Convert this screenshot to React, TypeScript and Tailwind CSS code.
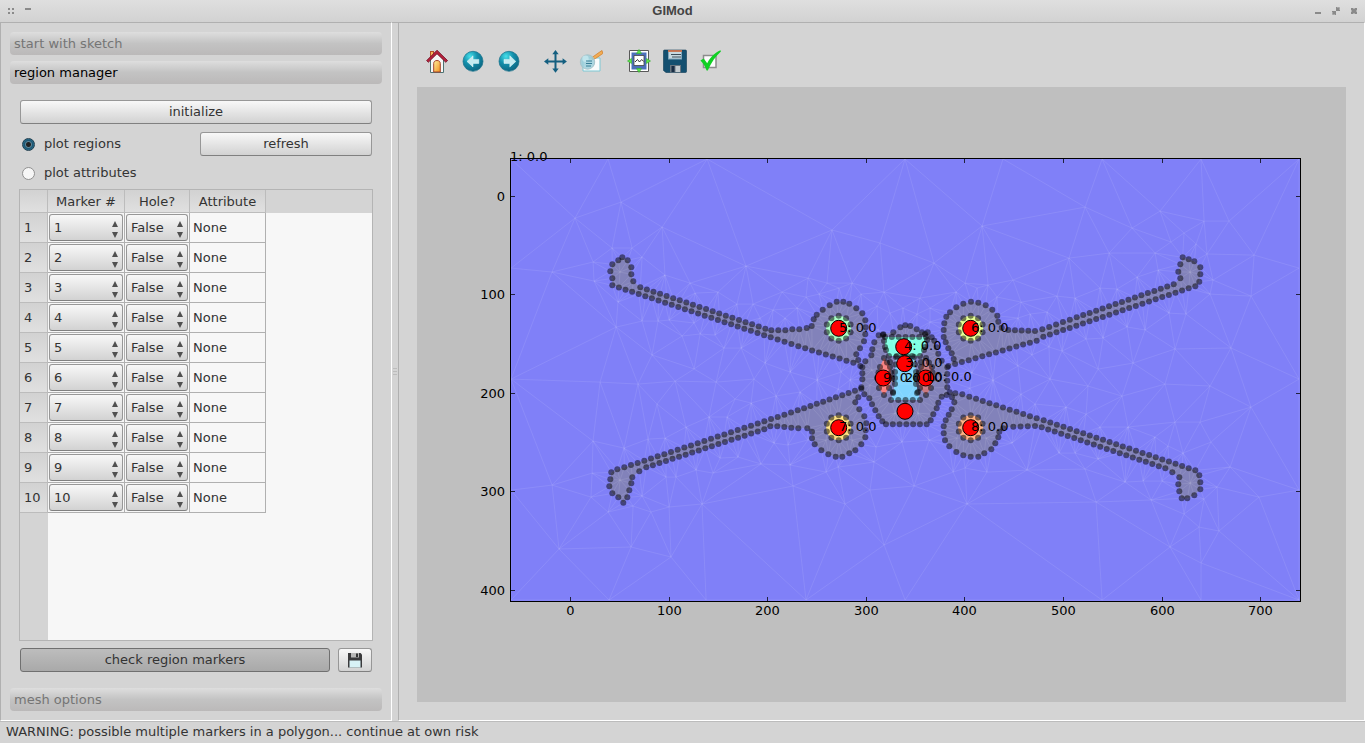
import type { ReactNode } from 'react';

type Pt = [number, number];

const SPACING = 7;

const UPPER_LEFT_ARM: Pt[] = [
  [622.3, 257.3], [627.7, 260.3], [631.3, 267.3], [631.3, 274.3], [633.3, 281.3], [640.3, 287.3],
  [765.3, 328.7], [771.3, 330.3], [785.3, 330.3], [792.3, 329.3], [799.3, 329.3], [806.7, 328],
  [811.7, 326], [813.7, 319.3], [816.7, 314.7], [822.7, 309.7], [829.7, 305.3], [836.7, 301.7],
  [843.3, 301.7], [849.3, 303.7], [856.3, 308.3], [862.3, 313.3], [865.3, 320.3], [865.7, 327.3],
  [865.3, 334.3], [864, 341.3], [860, 348.3], [856.3, 354.3], [858.3, 360], [860.3, 366],
  [853.3, 362.7], [798.3, 346.3], [770.7, 337.3], [612.3, 285.3], [612.3, 278.3], [610.3, 271.3],
  [612.3, 264.3], [618.3, 260.3],
];

const LOWER_LEFT_ARM: Pt[] = [
  [611.3, 472.3], [617.3, 469.3], [624.3, 467.3], [797.7, 410.3], [861.3, 388.7], [858.3, 397.3],
  [855.3, 402.3], [859.3, 409.3], [864.3, 416.3], [866.3, 423.3], [865.7, 430.3], [865.3, 437.3],
  [861.3, 444.3], [855.3, 450.3], [849.3, 453.3], [842.3, 456.7], [835.7, 456.7], [828.3, 454.3],
  [821.3, 450.3], [814.7, 444.3], [812, 438.3], [812, 431.7], [807.3, 428.3], [798.3, 428.3],
  [777.3, 426.3], [770.3, 426.3], [764.3, 429.3], [646.3, 467.3], [639.3, 471.3], [632.3, 477.3],
  [631.3, 483.3], [629.3, 490.3], [627.3, 497.3], [623.3, 502.7], [618.3, 497.3], [612.3, 493.3],
  [609.3, 486.3], [610.3, 479.3],
];

const UPPER_RIGHT_ARM: Pt[] = [
  [1182.7, 257.3], [1188.7, 259.3], [1194.3, 261.3], [1200.3, 267.3], [1200.3, 274.3],
  [1199.3, 281.7], [1195.3, 286.3], [1188.7, 288.3], [1043.3, 336.7], [1036.7, 340.7],
  [948.3, 366], [953.7, 359], [951.7, 353.3], [948.3, 348.3], [945.7, 342.3], [943.7, 337],
  [943.7, 330], [944.3, 323.3], [946.3, 316.7], [950, 312.3], [956.3, 307.3], [963.3, 303.7],
  [971, 301.7], [978.3, 302.7], [985.7, 305.3], [992.3, 309.7], [997.3, 315.7], [998.3, 321.7],
  [1001.7, 327.7], [1008.3, 330], [1035, 331], [1042.3, 329.3], [1076.7, 317.3], [1173.7, 284.3],
  [1180.3, 278.3], [1178.3, 271.7], [1180.3, 264.3],
];

const LOWER_RIGHT_ARM: Pt[] = [
  [949.7, 392.3], [955.3, 393.3], [962.3, 394.3], [969.3, 396.7], [1036.7, 418.3], [1043.7, 420.3],
  [1195.3, 470.3], [1199.3, 475.3], [1200.3, 482.3], [1200.3, 489.3], [1194.3, 495.3],
  [1187.3, 498.3], [1181.7, 498.3], [1179.3, 491.3], [1178.3, 484.3], [1179.3, 477.3],
  [1172.3, 472.3], [1165.3, 468.3], [1041.7, 427.3], [1035, 426], [1013.3, 426.7], [1003.3, 428.3],
  [999.3, 431.7], [998.3, 437.3], [995.3, 443.3], [991.3, 449.3], [984.3, 453.3], [978.3, 456.7],
  [970.7, 456.7], [963.3, 455.3], [956.3, 452], [949.3, 446.3], [945, 440.3], [943.7, 433.3],
  [943.7, 426.3], [945.7, 420.3], [951.7, 409.3], [954.3, 402.3],
];

const BODY: Pt[] = [
  [878.7, 335.3], [883.3, 334.3], [893.3, 332.3], [900.3, 327.3], [905.3, 325.3], [910.3, 326],
  [916.7, 329.3], [922, 332.3], [927.7, 332.3], [931.7, 337.3], [934.3, 340.7], [936.7, 347.3],
  [938.3, 353.7], [941.7, 360.7], [947.3, 367.3], [947.3, 387.3], [946.7, 395], [941.7, 396.7],
  [938.3, 402.7], [936.7, 408.3], [933.3, 414.3], [930.7, 420.3], [926.7, 424.3], [886, 424.3],
  [882.3, 421.3], [878.7, 416.3], [875.3, 410.3], [872, 404.3], [869.3, 398.3], [864.3, 394.3],
  [861.3, 387.3], [862.3, 379.3], [862.3, 367.3], [865.3, 361.3], [871.3, 355.3], [872.3, 349.3],
  [874.3, 342.3],
];

const HEAD: Pt[] = [[885, 337], [926, 337], [925, 347], [920, 356], [889, 356], [885, 347]];
const CORE: Pt[] = [[896, 357], [914, 357], [916, 372], [916, 384], [920, 400], [891, 400], [895, 384], [895, 372]];
const LEFT_POD: Pt[] = [[884, 358], [890, 367], [892, 378], [889, 388], [884, 395], [879, 388], [877, 378], [880, 367]];
const RIGHT_POD: Pt[] = [[926, 358], [932, 367], [933, 378], [931, 388], [926, 395], [920, 388], [917, 378], [921, 367]];

const ROTORS = [
  { x: 838.7, y: 328.3, fill: '#a6ffc4' },
  { x: 970.7, y: 328.3, fill: '#e6ff92' },
  { x: 838.7, y: 427.7, fill: '#ffe07e' },
  { x: 970.7, y: 427.7, fill: '#ffae80' },
];

const MARKERS: Pt[] = [
  [838.7, 328.3], [970.7, 328.3], [903.7, 346.7], [904.7, 363.7], [883.3, 378], [925.7, 378],
  [905, 411.3], [838.7, 427.7], [970.7, 427.7],
];

const LABELS: [string, number, number][] = [
  ['1: 0.0', 510, 161], ['2: 0.0', 905, 382], ['3: 0.0', 905, 367], ['4: 0.0', 904, 350],
  ['5: 0.0', 839, 332], ['6: 0.0', 971, 332], ['7: 0.0', 839, 431], ['8: 0.0', 971, 431],
  ['9: 0.0', 883, 382], ['10: 0.0', 926, 381],
];

const MESH_NODES: Pt[] = [
  [511, 159], [608, 159], [707, 159], [905, 159], [1003, 159], [1102, 159], [1201, 159], [1299, 159],
  [511, 268], [511, 379], [511, 490], [1299, 268], [1299, 379], [1299, 490],
  [511, 600], [609, 600], [706, 600], [806, 600], [905, 600], [1102, 600], [1201, 600], [1299, 600],
  [575, 218], [621, 202], [662, 227], [746, 266], [552, 272], [593, 262], [612, 248], [632, 248],
  [642, 257], [665, 275], [690, 283], [594, 281], [618, 302], [616, 327], [642, 321], [658, 321],
  [669, 320], [652, 355], [682, 336], [694, 369], [694, 323], [700, 334], [715, 335], [724, 348],
  [741, 348], [765, 363], [718, 292], [695, 293], [737, 304], [753, 304], [773, 310], [782, 292],
  [760, 318], [785, 318], [797, 308],
  [1085, 207], [1132, 228], [1160, 211], [1204, 221], [1229, 221], [1254, 255], [1109, 253],
  [1069, 258], [1155, 253], [1171, 242], [1184, 233], [1196, 244], [1207, 254], [1137, 277],
  [1158, 270], [1213, 280], [1251, 296], [1210, 294], [1186, 314], [1169, 313], [1100, 288],
  [1117, 289], [1145, 330], [1175, 349], [1231, 348], [1127, 327], [1133, 363], [1103, 338],
  [1086, 339], [1062, 351], [1098, 369], [1075, 298], [1057, 296], [1047, 312], [1049, 347],
  [832, 230], [880, 243], [934, 263], [982, 226], [808, 278], [827, 283], [852, 283], [839, 288],
  [884, 292], [861, 294], [920, 298], [965, 283], [988, 285], [1013, 280], [956, 292], [977, 288],
  [997, 297], [1021, 302], [806, 297], [819, 294], [877, 306], [890, 313], [903, 308], [917, 314],
  [930, 308], [878, 330], [930, 322], [1018, 318], [1030, 314],
  [593, 441], [657, 404], [552, 485], [624, 448], [686, 427], [592, 473], [591, 497], [608, 512],
  [633, 506], [651, 512], [669, 507], [702, 504], [559, 549], [631, 547], [671, 557], [713, 473],
  [696, 470], [676, 477], [666, 477], [642, 496], [648, 439], [665, 438], [709, 417], [727, 417],
  [751, 403], [761, 464], [793, 486], [774, 443], [788, 445], [738, 457], [720, 458],
  [1251, 407], [1200, 422], [1175, 422], [1211, 442], [1230, 467], [1183, 453], [1168, 446],
  [1128, 427], [1155, 437], [1086, 414], [1066, 407], [1100, 427], [1217, 487], [1259, 497],
  [1204, 499], [1199, 527], [1184, 514], [1219, 531], [1201, 563], [1170, 547], [1151, 500],
  [1096, 502], [1125, 482], [1143, 481], [1162, 481], [1075, 453], [1059, 453], [1098, 459],
  [1085, 469], [845, 504], [870, 490], [874, 462], [914, 486], [967, 504], [884, 545], [1027, 470],
  [987, 472], [953, 472], [965, 468], [838, 467], [826, 472], [902, 442], [929, 440], [1084, 469],
  [790, 465], [876, 447], [1012, 443], [808, 440], [600, 382], [638, 384], [675, 381], [716, 382],
  [754, 379], [790, 372], [817, 380], [841, 372], [838, 389], [800, 392], [776, 396], [735, 399],
  [972, 373], [970, 388], [993, 380], [1018, 366], [1021, 394], [1050, 379], [1088, 386],
  [1122, 396], [1165, 384], [1210, 386], [850, 380], [1035, 404], [1032, 355],
  [870, 385], [872, 370], [895, 413], [918, 413], [940, 378], [838, 316], [838, 342], [826, 325],
  [853, 330], [971, 315], [971, 343], [957, 328], [986, 328], [826, 440], [852, 440], [986, 438],
  [957, 438], [1190, 272], [620, 272], [1190, 483], [620, 480],
];

function sample(points: Pt[]): Pt[] {
  const out: Pt[] = [];
  points.forEach(([x, y], i) => {
    const [nx, ny] = points[(i + 1) % points.length];
    const steps = Math.max(1, Math.round(Math.hypot(nx - x, ny - y) / SPACING));
    for (let k = 0; k < steps; k++) out.push([x + ((nx - x) * k) / steps, y + ((ny - y) * k) / steps]);
  });
  return out;
}

function ring(cx: number, cy: number, r: number, count: number): Pt[] {
  return Array.from({ length: count }, (_, i) => {
    const a = (i / count) * Math.PI * 2 - Math.PI / 2;
    return [cx + r * Math.cos(a), cy + r * Math.sin(a)];
  });
}

// Bowyer-Watson triangulation, returned as a single path of unique edges.
function meshPath(input: Pt[]): string {
  const pts: Pt[] = [];
  input.forEach((p, i) => {
    const q: Pt = [p[0] + ((i * 37) % 11) * 0.01, p[1] + ((i * 53) % 13) * 0.01];
    if (!pts.some((o) => Math.hypot(o[0] - q[0], o[1] - q[1]) < 2)) pts.push(q);
  });
  const n = pts.length;
  const all: Pt[] = [...pts, [-20000, -10000], [20000, -10000], [900, 30000]];
  type Tri = { v: number[]; x: number; y: number; r: number };
  const make = (a: number, b: number, c: number): Tri => {
    const [ax, ay] = all[a];
    const [bx, by] = all[b];
    const [cx, cy] = all[c];
    const d = 2 * (ax * (by - cy) + bx * (cy - ay) + cx * (ay - by)) || 1e-9;
    const a2 = ax * ax + ay * ay;
    const b2 = bx * bx + by * by;
    const c2 = cx * cx + cy * cy;
    const x = (a2 * (by - cy) + b2 * (cy - ay) + c2 * (ay - by)) / d;
    const y = (a2 * (cx - bx) + b2 * (ax - cx) + c2 * (bx - ax)) / d;
    return { v: [a, b, c], x, y, r: (ax - x) ** 2 + (ay - y) ** 2 };
  };
  let tris: Tri[] = [make(n, n + 1, n + 2)];
  for (let i = 0; i < n; i++) {
    const [px, py] = all[i];
    const edges = new Map<string, [number, number, number]>();
    const keep: Tri[] = [];
    for (const t of tris) {
      if ((px - t.x) ** 2 + (py - t.y) ** 2 >= t.r) {
        keep.push(t);
        continue;
      }
      for (let k = 0; k < 3; k++) {
        const a = t.v[k];
        const b = t.v[(k + 1) % 3];
        const key = a < b ? `${a}-${b}` : `${b}-${a}`;
        const seen = edges.get(key);
        edges.set(key, [a, b, (seen ? seen[2] : 0) + 1]);
      }
    }
    edges.forEach(([a, b, count]) => {
      if (count === 1) keep.push(make(a, b, i));
    });
    tris = keep;
  }
  const done = new Set<string>();
  let d = '';
  for (const t of tris) {
    for (let k = 0; k < 3; k++) {
      const a = t.v[k];
      const b = t.v[(k + 1) % 3];
      if (a >= n || b >= n) continue;
      const key = a < b ? `${a}-${b}` : `${b}-${a}`;
      if (done.has(key)) continue;
      done.add(key);
      d += `M${all[a][0].toFixed(1)} ${all[a][1].toFixed(1)}L${all[b][0].toFixed(1)} ${all[b][1].toFixed(1)}`;
    }
  }
  return d;
}

const DOTS: Pt[] = [
  ...[UPPER_LEFT_ARM, LOWER_LEFT_ARM, UPPER_RIGHT_ARM, LOWER_RIGHT_ARM, BODY, HEAD, CORE, LEFT_POD, RIGHT_POD].flatMap(sample),
  ...ROTORS.flatMap((r) => ring(r.x, r.y, 12.5, 10)),
  [883, 335], [884, 341], [927, 340], [925, 334], [890, 362], [921, 362], [886, 350], [924, 350], [893, 393], [917, 393],
];

const MESH = meshPath([...MESH_NODES, ...DOTS]);

const poly = (p: Pt[]) => p.map((q) => q.join(',')).join(' ');

const X_TICKS = [0, 100, 200, 300, 400, 500, 600, 700].map((v) => ({ v, p: Math.floor(570.4 + v * 0.986) + 0.5 }));
const Y_TICKS = [0, 100, 200, 300, 400].map((v) => ({ v, p: Math.floor(196 + v * 0.986) + 0.5 }));

function Plot() {
  return (
    <svg viewBox="417 87 929 615" role="img" aria-label="Region plot" className="block size-full font-['DejaVu_Sans',sans-serif] text-[13px]">
      <rect x="510" y="158" width="790" height="443" fill="#8080f8" />
      <g fill="#8282ba">
        {[UPPER_LEFT_ARM, LOWER_LEFT_ARM, UPPER_RIGHT_ARM, LOWER_RIGHT_ARM, BODY].map((p, i) => (
          <polygon key={i} points={poly(p)} />
        ))}
      </g>
      <polygon points={poly(HEAD)} fill="#80ffe4" />
      <polygon points={poly(CORE)} fill="#80d4ff" />
      <polygon points={poly(LEFT_POD)} fill="#f88080" />
      <polygon points={poly(RIGHT_POD)} fill="#c87880" />
      {ROTORS.map((r) => (
        <circle key={r.fill} cx={r.x} cy={r.y} r="12.5" fill={r.fill} />
      ))}
      <path d={MESH} fill="none" stroke="#fff" strokeOpacity="0.09" strokeWidth="1" />
      <g fill="#000" fillOpacity="0.5">
        {DOTS.map(([x, y], i) => (
          <circle key={i} cx={x} cy={y} r="3" />
        ))}
      </g>
      <g fill="#f00" stroke="#000" strokeWidth="1">
        {MARKERS.map(([x, y], i) => (
          <circle key={i} cx={x} cy={y} r="8" />
        ))}
      </g>
      <rect x="510.5" y="158.5" width="790" height="443" fill="none" stroke="#000" strokeWidth="1" />
      <g stroke="#000" strokeOpacity="0.75">
        {X_TICKS.map(({ v, p }) => (
          <path key={v} d={`M${p} 159v4M${p} 601v-4`} />
        ))}
        {Y_TICKS.map(({ v, p }) => (
          <path key={v} d={`M511 ${p}h4M1300 ${p}h-4`} />
        ))}
      </g>
      {X_TICKS.map(({ v, p }) => (
        <text key={v} x={p} y="615" textAnchor="middle">{v}</text>
      ))}
      {Y_TICKS.map(({ v, p }) => (
        <text key={v} x="505" y={p + 4} textAnchor="end">{v}</text>
      ))}
      {LABELS.map(([text, x, y]) => (
        <text key={text} x={x} y={y}>{text}</text>
      ))}
    </svg>
  );
}

function Icon({ children }: { children: ReactNode }) {
  return <svg viewBox="0 0 24 24" className="size-6" aria-hidden="true">{children}</svg>;
}

const HomeIcon = () => (
  <Icon>
    <defs>
      <linearGradient id="door" x1="0" y1="0" x2="1" y2="1"><stop offset="0" stopColor="#fff0a0" /><stop offset="1" stopColor="#f0901c" /></linearGradient>
    </defs>
    <rect x="5.5" y="2.5" width="3" height="6" fill="#f6b85c" stroke="#b4502a" />
    <path d="M5.5 10.5 12 4l6.500 6.500V23.500H5.500z" fill="#f6f6f6" stroke="#4d7272" strokeWidth="1" />
    <path d="M8.700 23V14.500c0-1.800 1.300-3 3.300-3s3.300 1.200 3.300 3V23z" fill="url(#door)" stroke="#a5402a" strokeWidth="1" />
    <path d="M1.600 11.600 12 1.200l10.600 10.400-1.800 1.700L12 4.800l-8.700 8.500z" fill="#b4213c" stroke="#6e1226" strokeWidth=".8" />
  </Icon>
);

const ArrowIcon = ({ id, forward }: { id: string; forward?: boolean }) => (
  <Icon>
    <defs>
      <radialGradient id={id} cx=".35" cy=".25" r=".8"><stop offset="0" stopColor="#46e0ea" /><stop offset=".45" stopColor="#1490ac" /><stop offset="1" stopColor="#0c6480" /></radialGradient>
    </defs>
    <circle cx="12" cy="12.300" r="10" fill={`url(#${id})`} stroke="#15708a" strokeWidth=".7" />
    <path
      d={forward ? 'M18.800 12.400 12.800 6.800v3.600H7v4h5.800v3.600z' : 'M6 12.400l6-5.600v3.600h5.800v4H12v3.600z'}
      fill="#c4eaf0"
      stroke="#e8fafc"
      strokeWidth=".5"
    />
  </Icon>
);

const PanIcon = () => (
  <Icon>
    <path d="M12.500 4v16.500M4 12.500h17" stroke="#145f80" strokeWidth="2" />
    <path d="M12.500 1l3.200 4.200H9.300zM12.500 23.800l3.200-4.200H9.300zM1 12.500l4.300-3.200v6.400zM23.900 12.500l-4.300-3.200v6.400z" fill="#145f80" />
  </Icon>
);

const ZoomIcon = () => (
  <Icon>
    <path d="M4 9h17v13H4z" fill="#fafcfc" stroke="#7cc8d4" />
    <path d="M13 8.500 20 3.500l3-2 .8 3-7.300 5-3.300 1z" fill="#f2ac54" stroke="#d28430" strokeWidth=".8" />
    <circle cx="8.500" cy="13" r="7.200" fill="#9ccfda" fillOpacity=".85" stroke="#a8c4ca" />
    <circle cx="6.500" cy="9.800" r="3.200" fill="#c8eaf0" fillOpacity=".8" />
    <path d="M7 12h6M7 14.500h6M7 17h5" stroke="#387f96" />
  </Icon>
);

const SubplotsIcon = () => (
  <Icon>
    <path d="M2.500 1.500h19v21h-19z" fill="#fff" stroke="#585858" />
    <path d="M4.500 3.500h15v17h-15z" fill="#4c70ba" />
    <path d="M7 6.500h10v10H7z" fill="#fff" stroke="#444" strokeWidth=".8" />
    <path d="M8 13l2.500-2.500 2 2.500 2.200-2.500 2 2" fill="none" stroke="#222" strokeWidth=".9" />
    <path d="M12 .5l2.500 4h-5zM12 23.500l2.500-4h-5zM.5 12l4-2.500v5zM23.500 12l-4-2.500v5z" fill="#5ce84a" stroke="#2fa828" strokeWidth=".6" />
  </Icon>
);

const SaveIcon = () => (
  <Icon>
    <path d="M1.500 1h21q1 0 1 1v20.500q0 1-1 1H3L.5 21.500V2q0-1 1-1z" fill="#145070" stroke="#0d3a55" strokeWidth=".6" />
    <path d="M5 1.500h14v9H5z" fill="#7fa6bc" />
    <path d="M6 3h12v6.500H6z" fill="#c6d8e0" />
    <path d="M5 1.200h14v1.600H5z" fill="#dd7042" />
    <path d="M8 5.500h10M9 8h9" stroke="#3c4c58" />
    <path d="M7 16h11v7.500H7z" fill="#6a7680" />
    <path d="M8.500 17h3v6h-3z" fill="#182c44" />
    <path d="M12.500 17h4.500v6h-4.500z" fill="#c4ccd0" />
  </Icon>
);

const CheckIcon = () => (
  <Icon>
    <path d="M4.500 6.500h12.500v12H4.500z" fill="#fcfcfc" stroke="#8c8c8c" strokeWidth="1.500" />
    <path d="M1.400 11.600 4.700 9.600 8.200 14.200C11.300 8 15.500 4 21.500 1.200l.4 1.400C17 7 12.200 13.400 8.800 21.500h-1.200C6 17.500 4 14 1.400 11.600z" fill="#10d024" />
  </Icon>
);

const TitleButton = ({ label, d }: { label: string; d: string }) => (
  <button type="button" aria-label={label} className="flex size-[18px] items-center justify-center">
    <svg viewBox="0 0 8 8" className="size-2" aria-hidden="true"><path d={d} fill="#8a8a8a" /></svg>
  </button>
);

const ToolHeader = ({ label, active }: { label: string; active?: boolean }) => (
  <button
    type="button"
    className={`h-[23px] w-full shrink-0 rounded bg-linear-to-b from-[#dedede] via-[#c3c3c3] to-[#bbb9b9] px-1 text-left ${active ? 'text-black' : 'text-[#757575]'}`}
  >
    {label}
  </button>
);

const raised = 'rounded-[3px] border border-[#979797] border-b-[#808080] bg-linear-to-b from-[#f8f8f8] to-[#d2d2d2] text-[#333]';

function Combo({ label, value, options }: { label: string; value: string; options: string[] }) {
  return (
    <div className="relative p-px">
      <select aria-label={label} defaultValue={value} className={`block h-[27px] w-full appearance-none pl-1 outline-none ${raised}`}>
        {options.map((o) => (
          <option key={o}>{o}</option>
        ))}
      </select>
      <svg viewBox="0 0 6 17" className="pointer-events-none absolute top-2 right-[6px] h-[17px] w-[6px]" aria-hidden="true">
        <path d="M3 0l3 6H0zM3 17l3-6H0z" fill="#505050" />
      </svg>
    </div>
  );
}

const ROWS = ['1', '2', '3', '4', '5', '6', '7', '8', '9', '10'];
const head = 'h-[23px] border-r border-b border-[#bcbcbc] bg-linear-to-b from-[#d2d2d2] to-[#e0e0e0] p-0 pt-[2px] font-normal';

function RegionTable() {
  return (
    <div className="-mx-px min-h-0 flex-1 overflow-hidden border border-[#b4b4b4] bg-[linear-gradient(to_right,#d4d4d4_28px,#f7f7f7_28px)]">
      <table className="w-full table-fixed border-separate border-spacing-0">
        <colgroup>
          <col className="w-7" />
          <col className="w-[77px]" />
          <col className="w-[65px]" />
          <col className="w-[76px]" />
          <col />
        </colgroup>
        <thead>
          <tr>
            <td className={head} />
            <th scope="col" className={head}>Marker #</th>
            <th scope="col" className={head}>Hole?</th>
            <th scope="col" className={head}>Attribute</th>
            <td className="bg-[#d4d4d4] p-0" />
          </tr>
        </thead>
        <tbody>
          {ROWS.map((r) => (
            <tr key={r} className="h-[30px]">
              <th scope="row" className="border-r border-b border-[#bcbcbc] bg-linear-to-b from-[#d2d2d2] to-[#e0e0e0] p-0 pl-1 text-left font-normal">{r}</th>
              <td className="border-r border-b border-[#b0b0b0] p-0"><Combo label={`Marker ${r}`} value={r} options={ROWS} /></td>
              <td className="border-r border-b border-[#b0b0b0] p-0"><Combo label={`Hole ${r}`} value="False" options={['False', 'True']} /></td>
              <td className="border-r border-b border-[#b0b0b0] p-0 pl-[3px]">None</td>
              <td className="p-0" />
            </tr>
          ))}
        </tbody>
      </table>
    </div>
  );
}

const radio =
  "size-[13px] appearance-none rounded-full border border-[#909090] bg-[#f6f6f6] checked:border-[#1f3c4c] checked:bg-[radial-gradient(circle,#222_0_2px,#5d8598_3px,#1d5672_4px,#2b7596_6px)]";

function Sidebar() {
  return (
    <aside className="flex w-[392px] shrink-0 flex-col border-t border-r border-b border-l border-t-[#b0b0b0] border-r-white border-b-white border-l-[#b0b0b0] px-[9px] pt-[9px] pb-[9px]">
      <div className="flex flex-col gap-[6px]">
        <ToolHeader label="start with sketch" />
        <ToolHeader label="region manager" active />
      </div>
      <div className="flex min-h-0 flex-1 flex-col px-[10px] pt-4 pb-4">
        <button type="button" className={`h-6 w-full shrink-0 ${raised}`}>initialize</button>
        <div className="mt-2 flex shrink-0 items-center justify-between">
          <label className="flex items-center gap-[9px] pl-[2px]">
            <input type="radio" name="plot" defaultChecked className={radio} />
            plot regions
          </label>
          <button type="button" className={`h-6 w-[172px] ${raised}`}>refresh</button>
        </div>
        <label className="mt-[7px] mb-[6px] flex h-5 shrink-0 items-center gap-[9px] pl-[2px]">
          <input type="radio" name="plot" className={radio} />
          plot attributes
        </label>
        <RegionTable />
        <div className="mt-[7px] flex shrink-0 gap-2">
          <button type="button" aria-pressed="true" className="h-6 flex-1 rounded-[3px] border border-[#707070] bg-linear-to-b from-[#bdbdbd] to-[#a9a9a9] text-[#333]">
            check region markers
          </button>
          <button type="button" aria-label="Save markers" className={`flex h-6 w-[34px] items-center justify-center ${raised}`}>
            <svg viewBox="0 0 16 16" className="size-4" aria-hidden="true">
              <path d="M1 1h12.500L15 2.500V15.500H1z" fill="#3a3a3c" />
              <path d="M4 1h8v4.500H4z" fill="#b8b8b8" />
              <path d="M9 1.500h2V5H9z" fill="#333" />
              <path d="M2.500 8.500h11v7h-11z" fill="#d8f2f6" />
            </svg>
          </button>
        </div>
      </div>
      <ToolHeader label="mesh options" />
    </aside>
  );
}

const Tool = ({ label, children }: { label: string; children: ReactNode }) => (
  <button type="button" aria-label={label} className="size-6">{children}</button>
);

export default function App() {
  return (
    <div className="flex h-screen flex-col overflow-hidden bg-[#d4d4d4] font-['DejaVu_Sans',sans-serif] text-[13px] leading-5 text-[#333]">
      <header className="flex h-[22px] shrink-0 items-center bg-linear-to-b from-[#dfdfdf] to-[#d2d2d2]">
        <div className="flex w-9 items-center pl-[2px]">
          <TitleButton label="Window menu" d="M1 1h2v2H1zM5 1h2v2H5zM1 5h2v2H1zM5 5h2v2H5z" />
          <TitleButton label="Shade" d="M1 1h6v2H1z" />
        </div>
        <h1 className="flex-1 text-center font-['Liberation_Sans',sans-serif] text-[13px] font-bold text-[#444]">GIMod</h1>
        <div className="flex w-14 items-center">
          <TitleButton label="Minimize" d="M1 5h6v2H1z" />
          <TitleButton label="Restore" d="M4 0h1.500v1L7 0l1 1-1 1.500h1V4H4zM0 4h4v4H2.500V7L1 8 0 7l1-1.500H0z" />
          <TitleButton label="Close" d="M1 1h2l1 1 1-1h2v2L6 4l1 1v2H5L4 6 3 7H1V5l1-1-1-1z" />
        </div>
      </header>
      <div className="flex min-h-0 flex-1">
        <Sidebar />
        <div className="flex w-[6px] shrink-0 items-center justify-center border-t border-[#b0b0b0]">
          <svg viewBox="0 0 4 8" className="h-2 w-1" aria-hidden="true">
            <path d="M0 .5h4M0 3.500h4M0 6.500h4" stroke="#bcbcbc" />
          </svg>
        </div>
        <main className="flex min-w-0 flex-1 flex-col border border-[#b0b0b0] border-r-white border-b-white pr-[18px] pb-[18px] pl-[18px]">
          <div role="toolbar" aria-label="Plot tools" className="flex h-16 shrink-0 items-center pt-3 pl-2">
            <div className="flex gap-3">
              <Tool label="Home"><HomeIcon /></Tool>
              <Tool label="Back"><ArrowIcon id="back" /></Tool>
              <Tool label="Forward"><ArrowIcon id="forward" forward /></Tool>
            </div>
            <div className="ml-[22px] flex gap-3">
              <Tool label="Pan"><PanIcon /></Tool>
              <Tool label="Zoom"><ZoomIcon /></Tool>
            </div>
            <div className="ml-6 flex gap-3">
              <Tool label="Configure subplots"><SubplotsIcon /></Tool>
              <Tool label="Save figure"><SaveIcon /></Tool>
              <Tool label="Edit parameters"><CheckIcon /></Tool>
            </div>
          </div>
          <div className="min-h-0 flex-1 bg-[#bfbfbf] text-black">
            <Plot />
          </div>
        </main>
      </div>
      <footer className="h-[22px] shrink-0 border-t border-[#bcbcbc] px-[6px]">
        WARNING: possible multiple markers in a polygon... continue at own risk
      </footer>
    </div>
  );
}
